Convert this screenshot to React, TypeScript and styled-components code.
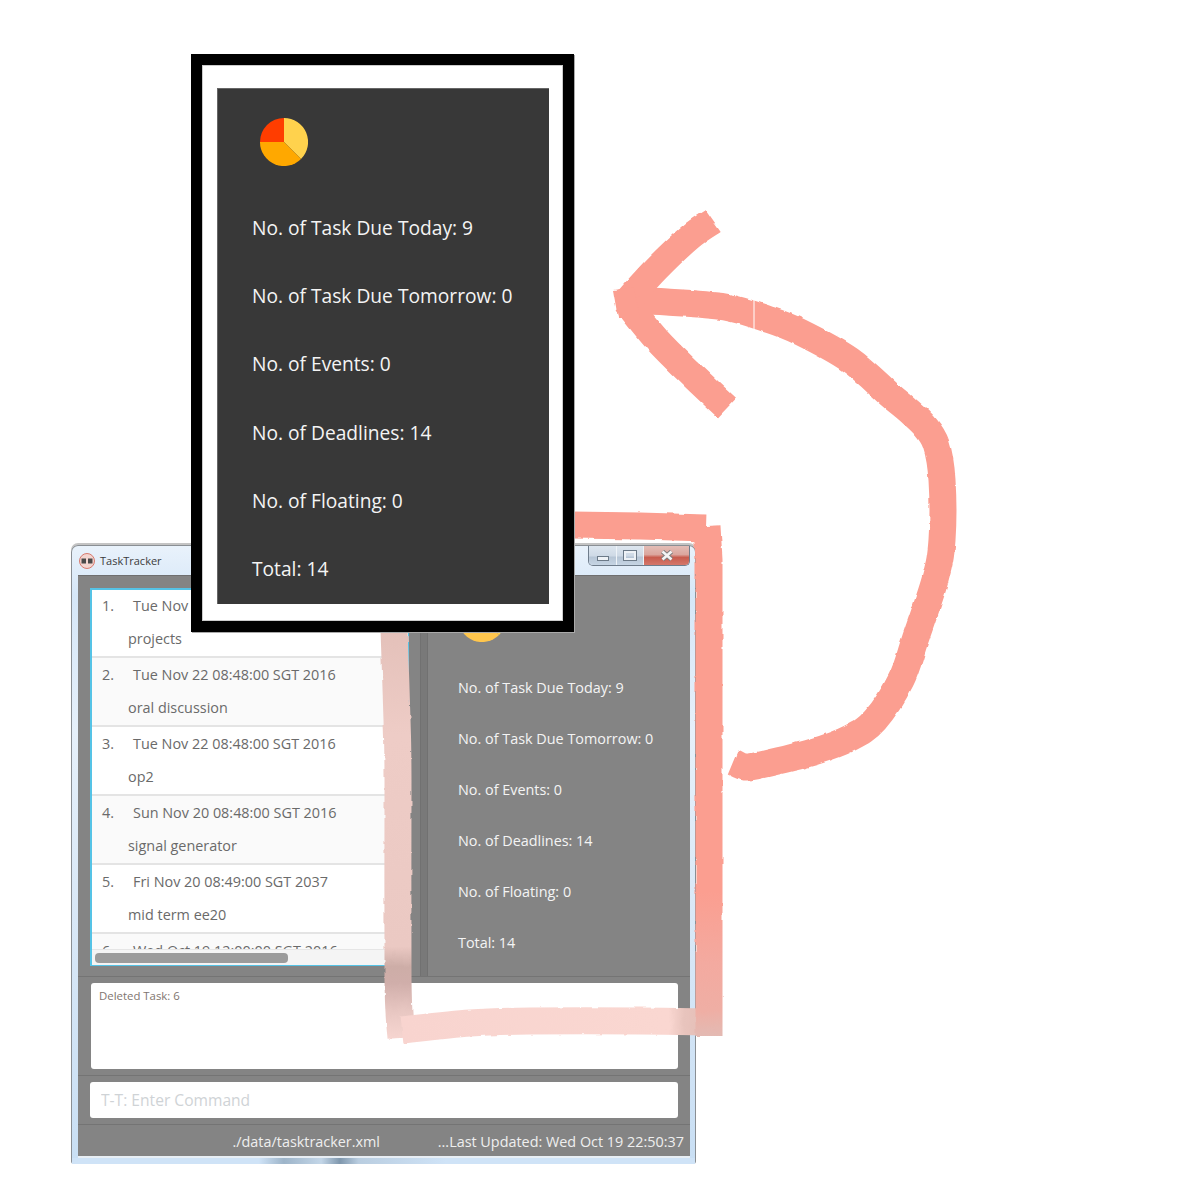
import React from 'react'
import styled, { createGlobalStyle } from 'styled-components'

const tasks = [
  { id: 1, date: 'Tue Nov 22 08:48:00 SGT 2016', name: 'projects' },
  { id: 2, date: 'Tue Nov 22 08:48:00 SGT 2016', name: 'oral discussion' },
  { id: 3, date: 'Tue Nov 22 08:48:00 SGT 2016', name: 'op2' },
  { id: 4, date: 'Sun Nov 20 08:48:00 SGT 2016', name: 'signal generator' },
  { id: 5, date: 'Fri Nov 20 08:49:00 SGT 2037', name: 'mid term ee20' },
  { id: 6, date: 'Wed Oct 19 12:00:00 SGT 2016', name: '' },
]

const stats = [
  'No. of Task Due Today: 9',
  'No. of Task Due Tomorrow: 0',
  'No. of Events: 0',
  'No. of Deadlines: 14',
  'No. of Floating: 0',
  'Total: 14',
]

function Pie({ large }: { large?: boolean }) {
  return (
    <svg width="48" height="48" viewBox="0 0 48 48">
      <path d="M24 24 L24 0 A24 24 0 0 1 41 41 Z" fill="#ffd24d" />
      <path d="M24 24 L41 41 A24 24 0 0 1 0 24 Z" fill={large ? '#ffa800' : '#ffc64d'} />
      <path d="M24 24 L0 24 A24 24 0 0 1 24 0 Z" fill="#ff3d00" />
    </svg>
  )
}

function Stats({ large }: { large?: boolean }) {
  return (
    <>
      <PieBox $large={large}>
        <Pie large={large} />
      </PieBox>
      {stats.map((s) => (
        <StatRow key={s} $large={large}>{s}</StatRow>
      ))}
    </>
  )
}

// catmull-rom through the points, so the brush strokes bend instead of kink
function smooth(pts: number[][]) {
  let d = `M${pts[0][0]} ${pts[0][1]}`
  for (let i = 0; i < pts.length - 1; i++) {
    const p0 = pts[i - 1] || pts[i]
    const p1 = pts[i]
    const p2 = pts[i + 1]
    const p3 = pts[i + 2] || p2
    const c1x = p1[0] + (p2[0] - p0[0]) / 6
    const c1y = p1[1] + (p2[1] - p0[1]) / 6
    const c2x = p2[0] - (p3[0] - p1[0]) / 6
    const c2y = p2[1] - (p3[1] - p1[1]) / 6
    d += ` C${c1x} ${c1y} ${c2x} ${c2y} ${p2[0]} ${p2[1]}`
  }
  return d
}

const shaft = [
  [733, 762], [745, 767], [760, 765], [813, 752], [850, 738], [875, 720], [901, 680],
  [915, 640], [935, 580], [942, 540], [942, 480], [936, 444], [924, 425], [908, 410], [890, 395],
  [850, 360], [800, 332], [767, 319], [725, 307], [667, 302], [626, 301],
]
const upperBarb = [[713, 221], [690, 237], [657, 268], [626, 302]]
const lowerBarb = [[626, 302], [657, 340], [690, 373], [727, 408]]

// hand drawn arrow going round the window, lighter towards its lower end
function PaintStrokes() {
  return (
    <PaintLayer width="1201" height="1190" viewBox="0 0 1201 1190">
      <defs>
        <linearGradient id="rightFade" gradientUnits="userSpaceOnUse" x1="0" y1="520" x2="0" y2="1036">
          <stop offset="0" stopColor="#fb9e90" />
          <stop offset="0.72" stopColor="#fb9e90" />
          <stop offset="0.86" stopColor="#f3aaa0" />
          <stop offset="0.95" stopColor="#efaea4" />
          <stop offset="1" stopColor="#e3bab3" />
        </linearGradient>
        <linearGradient id="bottomFade" gradientUnits="userSpaceOnUse" x1="400" y1="0" x2="716" y2="0">
          <stop offset="0" stopColor="#f8d4cf" />
          <stop offset="0.85" stopColor="#fad7d1" />
          <stop offset="0.9" stopColor="#e8c4bd" />
          <stop offset="1" stopColor="#e3bab3" />
        </linearGradient>
        <linearGradient id="leftFade" gradientUnits="userSpaceOnUse" x1="0" y1="633" x2="0" y2="1040">
          <stop offset="0" stopColor="#e4c1ba" />
          <stop offset="0.25" stopColor="#eeccc6" />
          <stop offset="0.77" stopColor="#ebc9c3" />
          <stop offset="0.82" stopColor="#cdada7" />
          <stop offset="0.86" stopColor="#d0aeaa" />
          <stop offset="0.93" stopColor="#e8c7c2" />
          <stop offset="1" stopColor="#f7d6d1" />
        </linearGradient>
        <filter id="rough" filterUnits="userSpaceOnUse" x="0" y="0" width="1201" height="1190">
          <feTurbulence type="fractalNoise" baseFrequency="0.09" numOctaves="2" seed="4" />
          <feDisplacementMap in="SourceGraphic" scale="3" xChannelSelector="R" yChannelSelector="G" />
        </filter>
      </defs>
      <g filter="url(#rough)">
        <Stroke stroke="url(#leftFade)" d={smooth([[394, 630], [397, 720], [398, 780], [398, 980], [401, 1038]])} />
        <Stroke stroke="url(#bottomFade)" d={smooth([[402, 1030], [470, 1023], [530, 1021], [640, 1021], [705, 1022]])} />
        <Stroke stroke="#fb9e90" d="M572 525 L640 526 L706 528" />
        <Stroke stroke="url(#rightFade)" d="M707 526 L709 560 L709 1036" />
        <Stroke stroke="#fb9e90" d={smooth(shaft)} />
        <Stroke stroke="#fb9e90" d={smooth(upperBarb)} />
        <Stroke stroke="#fb9e90" d={smooth(lowerBarb)} />
        <path d="M613 290 L634 287 L640 318 L618 318 Z" fill="#fb9e90" />
      </g>
      <path d="M754 297 L754 329" stroke="#fff" strokeWidth="1" />
    </PaintLayer>
  )
}

export default function App() {
  return (
    <Desktop>
      <GlobalStyle />
      <AppWindow>
        <TitleBar>
          <AppIcon width="16" height="16" viewBox="0 0 16 16">
            <circle cx="8" cy="8" r="7.5" fill="#f3d5d0" stroke="#d77a6e" />
            <rect x="2.5" y="5.5" width="4.5" height="5" fill="#4a4a4a" />
            <rect x="9" y="5.5" width="4.5" height="5" fill="#4a4a4a" />
          </AppIcon>
          <TitleText>TaskTracker</TitleText>
          <WindowButtons>
            <WinButton>
              <MinGlyph />
            </WinButton>
            <WinButton>
              <MaxGlyph />
            </WinButton>
            <WinButton $close>
              <CloseGlyph>
                <svg width="14" height="11" viewBox="0 0 14 11">
                  <path d="M2.5 1.5 L11.5 9.5 M11.5 1.5 L2.5 9.5" stroke="#7d7d7d" strokeWidth="4.5" />
                  <path d="M2.5 1.5 L11.5 9.5 M11.5 1.5 L2.5 9.5" stroke="#f4f4f4" strokeWidth="2.6" />
                </svg>
              </CloseGlyph>
            </WinButton>
          </WindowButtons>
        </TitleBar>

        <Body>
          <MainPane>
            <ListPanel>
              <ListViewport>
                <RowStack>
                  {tasks.map((t) => (
                    <TaskRow key={t.id} $alt={t.id % 2 === 0}>
                      <TaskLine>
                        <TaskNum>{t.id}.</TaskNum>
                        <span>{t.date}</span>
                      </TaskLine>
                      {t.name && <TaskName>{t.name}</TaskName>}
                    </TaskRow>
                  ))}
                </RowStack>
              </ListViewport>
              <ScrollTrack>
                <ScrollThumb />
              </ScrollTrack>
            </ListPanel>
            <Divider />
            <StatsPane>
              <Stats />
            </StatsPane>
          </MainPane>

          <FeedbackPane>
            <FeedbackBox>Deleted Task: 6</FeedbackBox>
          </FeedbackPane>

          <CommandPane>
            <CommandInput placeholder="T-T: Enter Command" readOnly />
          </CommandPane>

          <StatusBar>
            <StatusCell $pad={4}>./data/tasktracker.xml</StatusCell>
            <StatusCell $pad={6}>...Last Updated: Wed Oct 19 22:50:37</StatusCell>
          </StatusBar>
        </Body>
        <BottomEdge />
      </AppWindow>

      <PaintStrokes />

      <Popup>
        <PopupPanel>
          <Stats large />
        </PopupPanel>
      </Popup>
    </Desktop>
  )
}

const GlobalStyle = createGlobalStyle`
  html, body {
    margin: 0;
    padding: 0;
    background: #fff;
    overflow: hidden;
  }
  * {
    box-sizing: border-box;
  }
`
const Desktop = styled.div`
  position: relative;
  width: 1201px;
  height: 1190px;
  background: #fff;
  font-family: "Open Sans", "Noto Sans", sans-serif;
  overflow: hidden;
`
const AppWindow = styled.div`
  position: absolute;
  left: 71px;
  top: 545px;
  width: 625px;
  height: 619px;
  display: flex;
  flex-direction: column;
  padding: 0 5px 0 6px;
  border: 1px solid #8a8f94;
  border-bottom: 0;
  border-radius: 7px 7px 3px 3px;
  box-shadow: 0 -2px 0 #c4c4c4;
  background: linear-gradient(180deg, #e9f2fb 0%, #d6e7f8 8%, #e6f0fa 30%, #dbe9f7 55%, #c9dff4 100%);
`
const TitleBar = styled.div`
  height: 29px;
  flex: none;
  display: flex;
  align-items: flex-start;
  padding: 7px 0 0 1px;
  position: relative;
`
const AppIcon = styled.svg`
  flex: none;
`
const TitleText = styled.span`
  margin-left: 5px;
  font-family: "Open Sans", sans-serif;
  font-size: 11px;
  line-height: 16px;
  color: #3c3c3c;
`
const WindowButtons = styled.div`
  position: absolute;
  right: 0;
  top: 0;
  height: 20px;
  display: flex;
  border: 1px solid #6f7d8c;
  border-top: 0;
  border-radius: 0 0 5px 5px;
  overflow: hidden;
`
const WinButton = styled.div<{ $close?: boolean }>`
  width: ${(p) => (p.$close ? '46px' : '27px')};
  display: flex;
  align-items: center;
  justify-content: center;
  border-left: 1px solid #eef3f8;
  &:first-child {
    border-left: 0;
  }
  background: ${(p) =>
    p.$close
      ? 'linear-gradient(180deg, #e3bdb6 0%, #dba69e 45%, #c85c4e 60%, #d4776b 100%)'
      : 'linear-gradient(180deg, #dde6ef 0%, #cfdae6 50%, #b7c6d6 60%, #c6d5e4 100%)'};
`
const MinGlyph = styled.div`
  width: 12px;
  height: 5px;
  margin-top: 5px;
  background: #eef2f6;
  border: 1px solid #6c7a88;
`
const MaxGlyph = styled.div`
  width: 12px;
  height: 9px;
  border: 2px solid #eef2f6;
  outline: 1px solid #6c7a88;
`
const CloseGlyph = styled.div`
  display: flex;
`
const Body = styled.div`
  flex: none;
  height: 583px;
  display: flex;
  flex-direction: column;
  background: #848484;
  border-top: 1px solid #6f6f6f;
`
const MainPane = styled.div`
  height: 401px;
  flex: none;
  display: flex;
  padding-left: 12px;
  border-bottom: 1px solid #747474;
`
const ListPanel = styled.div`
  width: 319px;
  height: 378px;
  flex: none;
  margin-top: 12px;
  display: flex;
  flex-direction: column;
  border: 2px solid #55c3e6;
  border-right-width: 1px;
  background: #fff;
`
const ListViewport = styled.div`
  height: 359px;
  flex: none;
  overflow: hidden;
`
// the list is scrolled down by a pixel
const RowStack = styled.div`
  margin-top: -1px;
`
const TaskRow = styled.div<{ $alt?: boolean }>`
  height: 69px;
  border-bottom: 2px solid #e4e4e4;
  background: ${(p) => (p.$alt ? '#fafafa' : '#fff')};
  color: #6a6a6a;
  font-size: 14.4px;
  white-space: nowrap;
`
const TaskLine = styled.div`
  height: 33px;
  line-height: 33px;
  padding-left: 10px;
  display: flex;
`
const TaskNum = styled.span`
  width: 31px;
  flex: none;
`
const TaskName = styled.div`
  height: 33px;
  line-height: 33px;
  padding-left: 36px;
`
const ScrollTrack = styled.div`
  flex: 1;
  padding: 3px 3px 2px;
  background: #f4f4f4;
  border-top: 1px solid #e6e6e6;
`
const ScrollThumb = styled.div`
  width: 193px;
  height: 10px;
  border-radius: 4px;
  background: #9b9b9b;
`
const Divider = styled.div`
  width: 8px;
  flex: none;
  margin-left: 11px;
  background: #797979;
  border-left: 1px solid #717171;
  border-right: 1px solid #717171;
`
const StatsPane = styled.div`
  flex: 1;
  padding-left: 30px;
`
const PieBox = styled.div<{ $large?: boolean }>`
  height: ${(p) => (p.$large ? '105px' : '85.5px')};
  padding-top: ${(p) => (p.$large ? '29px' : '18px')};
  padding-left: ${(p) => (p.$large ? '42px' : '0')};
`
const StatRow = styled.div<{ $large?: boolean }>`
  height: ${(p) => (p.$large ? '68.2px' : '51px')};
  line-height: ${(p) => (p.$large ? '68.2px' : '51px')};
  padding-left: ${(p) => (p.$large ? '34px' : '0')};
  font-size: ${(p) => (p.$large ? '19.2px' : '14.4px')};
  color: #f4f4f4;
  white-space: nowrap;
`
const FeedbackPane = styled.div`
  height: 99px;
  flex: none;
  padding: 6px 12px 6px 13px;
  border-bottom: 1px solid #747474;
`
const FeedbackBox = styled.div`
  height: 86px;
  padding: 5px 8px;
  background: #fff;
  border-radius: 3px;
  font-size: 11.4px;
  line-height: 16px;
  color: #7f756f;
`
const CommandPane = styled.div`
  height: 49px;
  flex: none;
  padding: 6px 12px 6px 12px;
  border-bottom: 1px solid #747474;
`
const CommandInput = styled.input`
  display: block;
  width: 100%;
  height: 36px;
  padding: 0 11px;
  border: 0;
  border-radius: 3px;
  background: #fff;
  outline: none;
  font-family: "Open Sans", sans-serif;
  font-size: 15.6px;
  &::placeholder {
    color: #cfd3d6;
    opacity: 1;
  }
`
const StatusBar = styled.div`
  flex: 1;
  display: grid;
  grid-template-columns: 306px 306px;
  align-items: center;
  padding-top: 2px;
  border-bottom: 2px solid #e8eef4;
`
const StatusCell = styled.div<{ $pad: number }>`
  text-align: right;
  padding-right: ${(p) => p.$pad}px;
  font-size: 14.4px;
  color: #efefef;
  white-space: nowrap;
`
const BottomEdge = styled.div`
  flex: 1;
  margin: 0 -5px 0 -6px;
  background: linear-gradient(90deg, #cfe3f7 0%, #cfe3f7 30%, #9db4c9 34%, #c3d6e8 40%, #7f97ad 43%, #b9cde0 46%, #cfe3f7 60%, #cfe3f7 100%);
`
const PaintLayer = styled.svg`
  position: absolute;
  left: 0;
  top: 0;
  pointer-events: none;
`
const Stroke = styled.path`
  fill: none;
  stroke-width: 27;
  stroke-linejoin: round;
  stroke-linecap: butt;
`
const Popup = styled.div`
  position: absolute;
  left: 191px;
  top: 54px;
  width: 383px;
  height: 578px;
  padding: 23px 14px 17px 15px;
  background: #fff;
  border: 11px solid #000;
  box-shadow: inset 0 0 0 1px #ccc, 1px 1px 0 #aaa;
`
const PopupPanel = styled.div`
  height: 100%;
  background: #383838;
  border-top: 1px solid #666;
  border-left: 1px solid #666;
`
